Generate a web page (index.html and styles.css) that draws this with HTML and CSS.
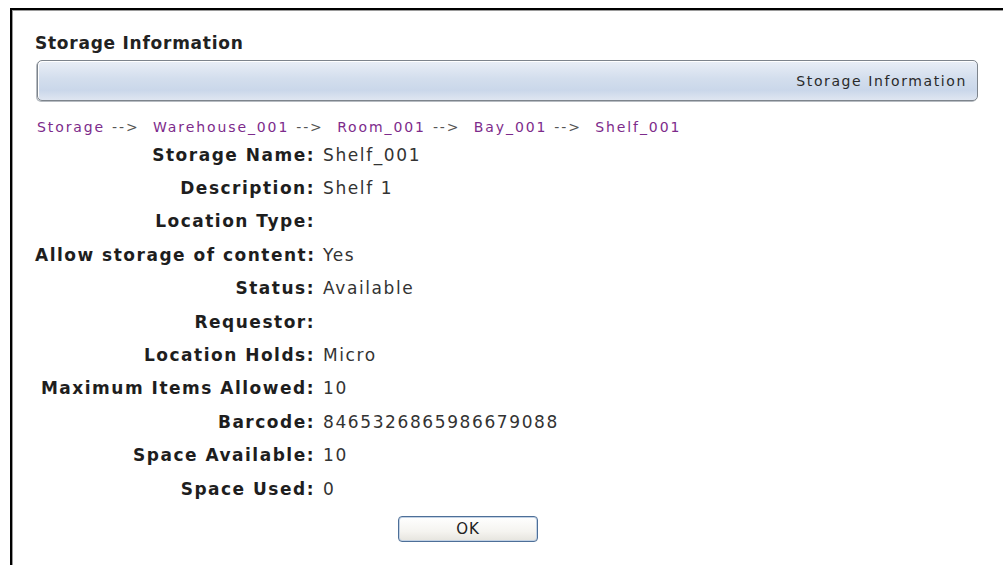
FILE: index.html
```html
<!DOCTYPE html>
<html lang="en">
<head>
<meta charset="utf-8">
<title>Storage Information</title>
<link rel="stylesheet" href="styles.css">
</head>
<body>
<div class="window">
  <h1 class="title">Storage Information</h1>
  <div class="bar"><span class="bar-label">Storage Information</span></div>
  <nav class="crumbs">
    <a href="#">Storage</a><span class="arrow">--&gt;</span>
    <a href="#">Warehouse_001</a><span class="arrow">--&gt;</span>
    <a href="#">Room_001</a><span class="arrow">--&gt;</span>
    <a href="#">Bay_001</a><span class="arrow">--&gt;</span>
    <a href="#">Shelf_001</a>
  </nav>
  <dl class="details">
    <dt>Storage Name:</dt><dd>Shelf_001</dd>
    <dt>Description:</dt><dd>Shelf 1</dd>
    <dt>Location Type:</dt><dd></dd>
    <dt>Allow storage of content:</dt><dd>Yes</dd>
    <dt>Status:</dt><dd>Available</dd>
    <dt>Requestor:</dt><dd></dd>
    <dt>Location Holds:</dt><dd>Micro</dd>
    <dt>Maximum Items Allowed:</dt><dd>10</dd>
    <dt>Barcode:</dt><dd>8465326865986679088</dd>
    <dt>Space Available:</dt><dd>10</dd>
    <dt>Space Used:</dt><dd>0</dd>
  </dl>
  <div class="actions"><button class="btn" type="button">OK</button></div>
</div>
</body>
</html>
```

FILE: styles.css
```css
html, body {
  margin: 0;
  background: #fff;
}

.window {
  margin: 8px 0 0 10px;
  height: 557px;
  box-sizing: border-box;
  border-top: 2px solid #000;
  border-left: 2px solid #000;
  box-shadow: inset 1px 1px 0 #9a9a9a;
  padding: 23px 25px 0 23px;
  overflow: hidden;
  color: #222;
}

.title {
  margin: 0;
  font: bold 17px/20px "DejaVu Sans", sans-serif;
  letter-spacing: 0.75px;
  color: #222;
}

.bar {
  margin: 7px 0 0 2px;
  height: 41px;
  box-sizing: border-box;
  border: 1px solid #7d848c;
  border-radius: 5px;
  box-shadow: inset 1px 1px 0 #fff, -1px 1px 0 #b7bcc2;
  background: linear-gradient(#e9eef6 0%, #d3deed 45%, #cad7ea 75%, #dfe6f1 100%);
  display: flex;
  align-items: center;
  justify-content: flex-end;
  padding-right: 10px;
}

.bar-label {
  font: 14px/20px "DejaVu Sans", sans-serif;
  letter-spacing: 1.6px;
  color: #2a2a2a;
}

.crumbs {
  margin: 16px 0 0 2px;
  font: 14px/20px "DejaVu Sans", sans-serif;
  letter-spacing: 1.9px;
  white-space: nowrap;
}

.crumbs a {
  color: #7d2b8b;
  text-decoration: none;
}

.arrow {
  color: #555;
  margin: 0 7px;
}

.details {
  margin: 1px 0 0 0;
  display: grid;
  grid-template-columns: 279px auto;
  column-gap: 9px;
  grid-auto-rows: 33.4px;
  align-items: center;
}

.details dt {
  text-align: right;
  font: bold 17px/20px "DejaVu Sans", sans-serif;
  letter-spacing: 1.5px;
  color: #1e1e1e;
  white-space: nowrap;
  margin-right: -1px;
}

.details dd {
  margin: 0;
  font: 17px/20px "DejaVu Sans", sans-serif;
  letter-spacing: 1.6px;
  color: #333;
  white-space: nowrap;
}

.actions {
  margin: 11px 0 0 363px;
}

.btn {
  width: 140px;
  height: 26px;
  border: 1px solid #4d6f98;
  border-radius: 4px;
  box-shadow: inset 0 0 0 1px #c3d2e4;
  background: linear-gradient(#ffffff 0%, #f5f4f0 60%, #e6e4de 100%);
  font: 15px/20px "DejaVu Sans", sans-serif;
  letter-spacing: 1px;
  color: #222;
  padding: 0;
}
```
